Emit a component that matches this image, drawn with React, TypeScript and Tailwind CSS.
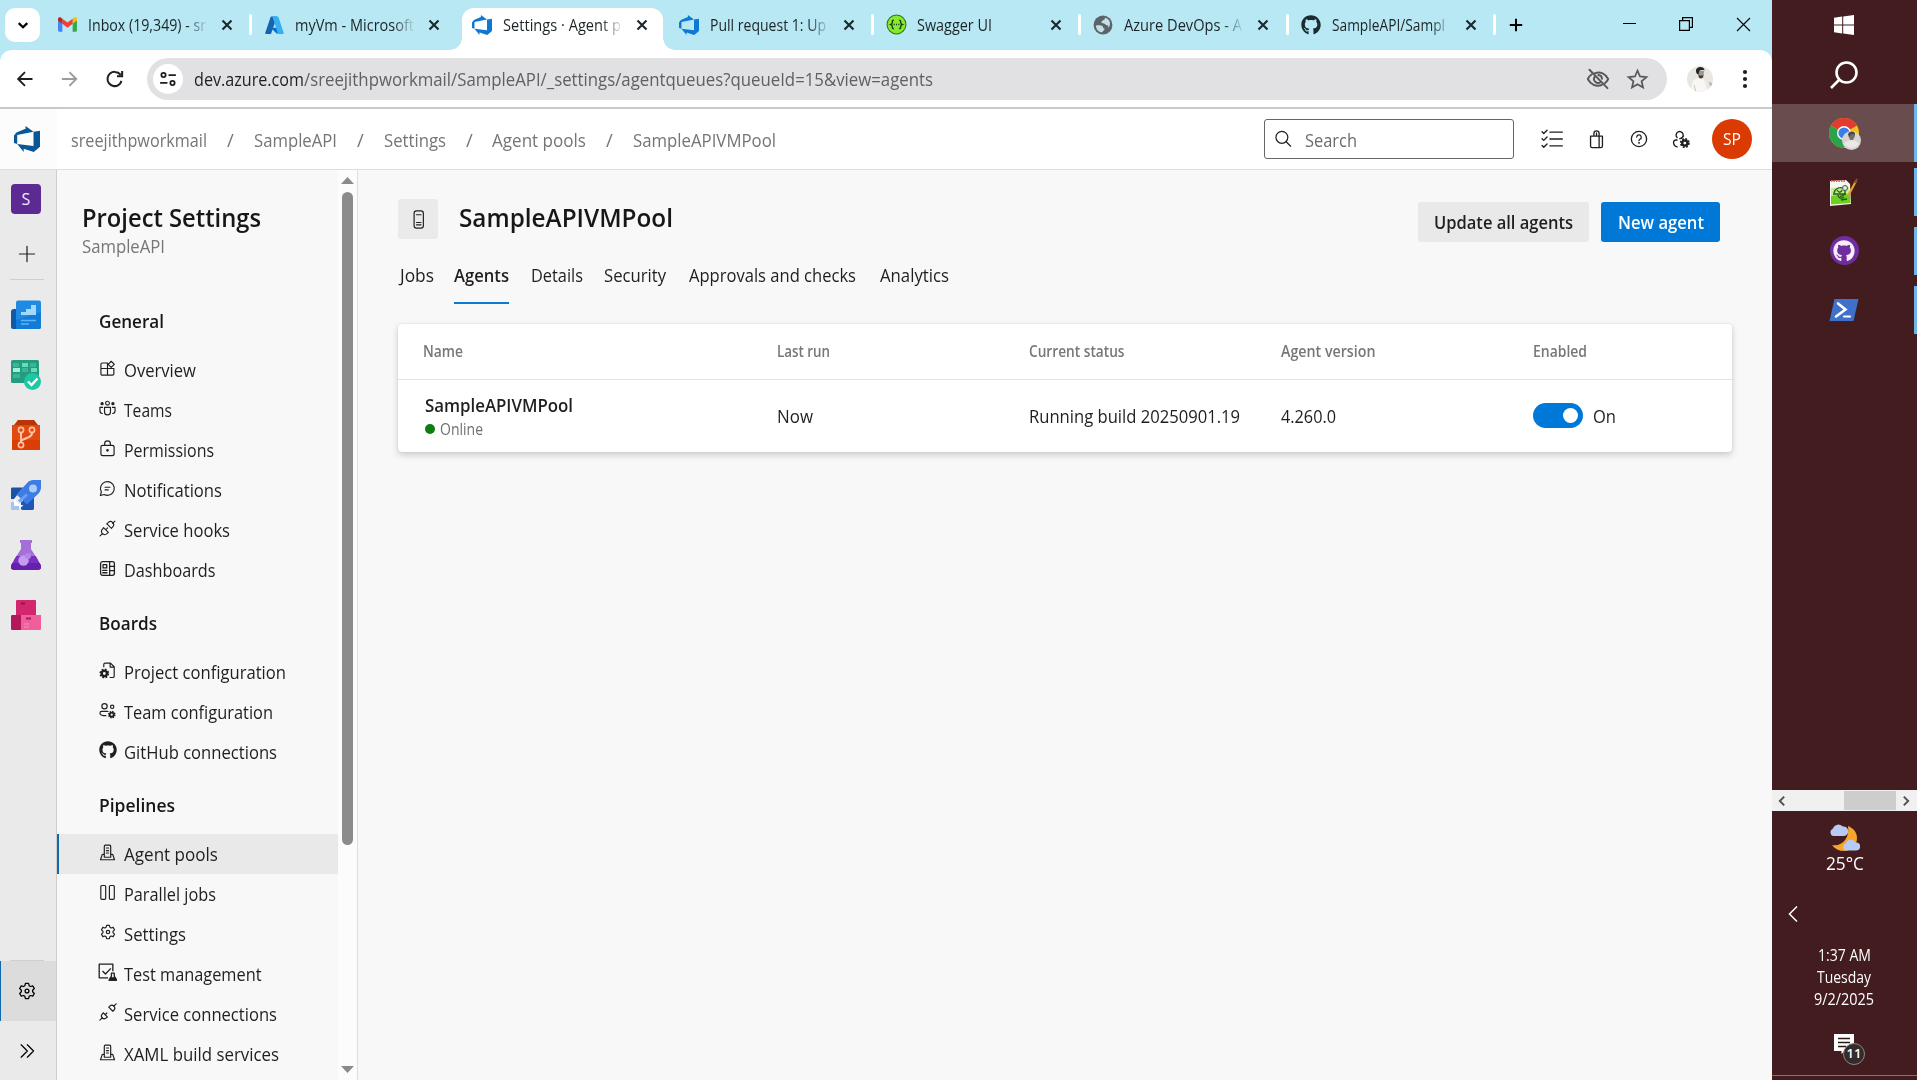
import { useLayoutEffect, useRef, useState, type ReactNode } from "react";
import { FaGithub } from "react-icons/fa";

/** One line of text whose glyphs are condensed or widened to an exact width. */
function Fit({ w, className = "", children }: { w: number; className?: string; children: ReactNode }) {
  const ref = useRef<HTMLSpanElement>(null);
  const [scale, setScale] = useState(1);
  useLayoutEffect(() => {
    if (ref.current && ref.current.offsetWidth > 0) {
      setScale(w / ref.current.getBoundingClientRect().width);
    }
  }, []);
  return (
    <span className={"block shrink-0 whitespace-nowrap " + className} style={{ width: w }}>
      <span ref={ref} className="inline-block origin-left" style={{ transform: `scaleX(${scale})` }}>
        {children}
      </span>
    </span>
  );
}

function Line({ size = 18, className = "", sw = 1.1, children }: { size?: number; className?: string; sw?: number; children: ReactNode }) {
  return (
    <svg width={size} height={size} viewBox="0 0 16 16" fill="none" stroke="currentColor" strokeWidth={sw} strokeLinecap="round" strokeLinejoin="round" className={"shrink-0 " + className}>
      {children}
    </svg>
  );
}

/** Small filled gear with a round hole, centred on (cx, cy). */
function SolidGear({ cx, cy, r = 3.8 }: { cx: number; cy: number; r?: number }) {
  return (
    <g transform={`translate(${cx} ${cy}) scale(${r / 4})`} strokeLinecap="butt">
      <circle r="2.100" strokeWidth="1.900" />
      <circle r="3.300" strokeWidth="1.400" strokeDasharray="1.500 1.091" />
    </g>
  );
}

/* ---------- logos ---------- */

function DevOpsLogo({ size, className = "" }: { size: number; className?: string }) {
  return (
    <svg width={size} height={size} viewBox="0 0 24 24" className={className} fill="currentColor">
      <path d="M0 8.877L2.247 5.91l8.405-3.416V.022l7.37 5.393L2.966 8.338v8.225L0 15.707zm24-4.45v14.651l-5.753 4.9-9.303-3.057v3.056l-5.978-7.416 15.057 1.798V5.415z" />
    </svg>
  );
}

function GmailLogo() {
  return (
    <svg width="19" height="15" viewBox="0 0 24 18">
      <path d="M0 3v13.4C0 17.3.7 18 1.6 18h3.9V7.5z" fill="#4285f4" />
      <path d="M18.5 18h3.9c.9 0 1.6-.7 1.6-1.6V3l-5.5 4.5z" fill="#34a853" />
      <path d="M18.500 1.700v6.500L24 4V2.200C24 .2 21.700-.7 20.200.4z" fill="#fbbc04" />
      <path d="M5.500 8.200V1.700L12 6.600l6.500-4.900v6.500L12 13.100z" fill="#ea4335" />
      <path d="M0 2.200V4l5.500 4.200V1.700L3.800.4C2.300-.7 0 .2 0 2.200z" fill="#c5221f" />
    </svg>
  );
}

function AzureLogo() {
  return (
    <svg width="19" height="18" viewBox="0 0 96 92">
      <path d="M33 2h28L31 89c-1 2-3 3-5 3H6c-4 0-6-3-5-7L28 5c1-2 3-3 5-3z" fill="#1564b0" />
      <path d="M71 60H28l28 27c2 2 4 3 6 3h24z" fill="#0b6fcf" />
      <path d="M68 5c-1-2-3-3-5-3H33c2 0 4 1 5 3l26 80c1 4-1 7-5 7h31c4 0 6-3 5-7z" fill="#35b0f0" />
    </svg>
  );
}

function SwaggerLogo() {
  return (
    <svg width="21" height="21" viewBox="0 0 20 20">
      <circle cx="10" cy="10" r="9.500" fill="#2c7a0b" />
      <circle cx="10" cy="10" r="8.500" fill="#85ea2d" />
      <g fill="none" stroke="#1d3b14" strokeWidth="1.300">
        <path d="M7.500 5.800c-1.500 0-1.500.7-1.500 2s0 1.800-1.300 2.200C6 10.400 6 10.900 6 12.200s0 2 1.500 2M12.500 5.800c1.500 0 1.500.7 1.500 2s0 1.800 1.300 2.200c-1.300.4-1.300.9-1.300 2.200s0 2-1.500 2" />
        <path d="M7.300 10h1M9.500 10h1M11.700 10h1" />
      </g>
    </svg>
  );
}

function GlobeIcon() {
  return (
    <svg width="20" height="20" viewBox="0 0 24 24">
      <circle cx="12" cy="12" r="11.300" fill="#5b6468" />
      <path d="M3.500 12.500c3-.6 6.500-.5 8 1 .8 1 .2 2 1.500 2.300 1 .2 1 1 .5 2l-2.500 3C6.500 20.300 3.500 17 3.500 12.500zM10 3.500l4-.3c1 1-.2 2.500-1.500 2.700-1 .2-1 1.300-2 2-.8.600-.5 1.600.8 2 1.700.4 2.700.2 3.700 1.500.9 1.200 2.700.7 3.200 1.600.4.900 0 1.900-.6 2.700 2.500-1.500 3.400-5 2.400-8-1-2.700-4-4.500-6-4.500z" fill="#c4dfe5" />
    </svg>
  );
}

function CloseX() {
  return (
    <Line size={18} sw={1.9} className="text-[#1d2a2d]">
      <path d="M4 4l8 8M12 4l-8 8" strokeLinecap="butt" />
    </Line>
  );
}

/* ---------- browser chrome ---------- */

function Tab({ icon, title, w, active, fade = true, sep }: { icon: ReactNode; title: string; w: number; active?: boolean; fade?: boolean; sep?: boolean }) {
  return (
    <div className="relative flex h-[42px] w-[207.300px] shrink-0 items-center">
      {active && (
        <>
          <div className="absolute inset-y-0 left-[3px] w-[201px] rounded-t-[12px] bg-white" />
          <div className="absolute bottom-0 left-[-9px] size-3 bg-[radial-gradient(circle_at_0_0,#b7e8f3_11.500px,#fff_12px)]" />
          <div className="absolute bottom-0 left-[204px] size-3 bg-[radial-gradient(circle_at_100%_0,#b7e8f3_11.500px,#fff_12px)]" />
        </>
      )}
      <div className="relative ml-[11px] flex w-6 items-center justify-center pb-[9px]">{icon}</div>
      <div
        className={
          "relative ml-[9px] w-[120px] pb-[8px] text-[15.500px] leading-5 text-[#1c2426] " +
          (fade ? "[mask-image:linear-gradient(to_right,#000_82%,transparent)]" : "")
        }
      >
        <Fit w={w}>{title}</Fit>
      </div>
      <div className="relative ml-[10px] pb-[9px]">
        <CloseX />
      </div>
      {sep && <div className="mb-[9px] ml-auto h-[21px] w-[3px] translate-x-px rounded bg-white" />}
    </div>
  );
}

function TabStrip() {
  return (
    <div className="flex h-[50px] items-end bg-[#b7e8f3]">
      <div className="ml-[5px] mr-1 flex h-[42px] w-[35px] items-start">
        <div className="flex h-[34px] w-[35px] items-center justify-center rounded-[10px] bg-white">
          <Line size={18} sw={2}>
            <path d="M4.200 6.300L8 10l3.800-3.700" strokeLinecap="butt" strokeLinejoin="miter" />
          </Line>
        </div>
      </div>
      <Tab icon={<GmailLogo />} title="Inbox (19,349) - sr" w={118} sep />
      <Tab icon={<AzureLogo />} title="myVm - Microsoft" w={119} />
      <Tab icon={<DevOpsLogo size={20} className="text-[#0f78d4]" />} title="Settings · Agent p" w={118} active />
      <Tab icon={<DevOpsLogo size={20} className="text-[#0f78d4]" />} title="Pull request 1: Up" w={116} sep />
      <Tab icon={<SwaggerLogo />} title="Swagger UI" w={75} fade={false} sep />
      <Tab icon={<GlobeIcon />} title="Azure DevOps - A" w={118} sep />
      <Tab icon={<FaGithub size={20} className="text-[#1c2a30]" />} title="SampleAPI/Sampl" w={113} sep />
      <div className="ml-3 flex h-[42px] items-start pt-2">
        <Line size={18} sw={1.800}>
          <path d="M8 2.500v11M2.500 8h11" strokeLinecap="butt" />
        </Line>
      </div>
      <div className="ml-auto flex h-[42px] items-start gap-[43px] pr-[21px] pt-[8px] text-black">
        <svg width="14" height="16" className="mr-[-1px]"><path d="M0 7.500h13" stroke="currentColor" /></svg>
        <svg width="14" height="16" viewBox="0 0 14 16" fill="none" stroke="currentColor" strokeWidth="1.200">
          <path d="M.6 4.600h9.800v9.800H.6zM3.600 4.500V1.600h9.800v9.800h-2.900" />
        </svg>
        <svg width="15" height="16" fill="none" stroke="currentColor" strokeWidth="1.100"><path d="M1 2l13 13M14 2L1 15" /></svg>
      </div>
    </div>
  );
}

function Toolbar() {
  return (
    <div className="h-[59px] bg-[#b7e8f3]">
      <div className="flex h-[59px] items-start rounded-t-[12px] border-b-2 border-[#c9c9c9] bg-white pt-2 text-[#1f1f1f]">
        <div className="ml-[15px] flex h-[42px] items-center gap-[25px]">
          <Line size={20} sw={1.500}><path d="M14 8H2.500M8 2.500L2.500 8 8 13.500" strokeLinecap="butt" strokeLinejoin="miter" /></Line>
          <Line size={20} sw={1.500} className="text-[#9b9b9b]"><path d="M1.500 8H13M7.500 2.500L13 8l-5.500 5.500" strokeLinecap="butt" strokeLinejoin="miter" /></Line>
          <Line size={20} sw={1.600}><path d="M13.200 9.500A5.700 5.700 0 118 2.300c1.800 0 3.400.9 4.600 2.300M13.700 1.600v4.100H9.600" strokeLinecap="butt" strokeLinejoin="miter" /></Line>
        </div>
        <div className="ml-[22px] flex h-[42px] w-[1520px] items-center rounded-full bg-[#e1e1e3]">
          <div className="ml-[6px] flex size-[30px] items-center justify-center rounded-full bg-white">
            <Line size={18} sw={1.600}>
              <circle cx="4" cy="4.500" r="1.900" /><path d="M8.500 4.500H15M1 11.500h6.500" strokeLinecap="butt" /><circle cx="12" cy="11.500" r="1.900" />
            </Line>
          </div>
          <div className="ml-[10.500px] flex text-[18px] leading-6 text-[#5f6063]">
            <Fit w={110} className="text-[#1f1f1f]">dev.azure.com</Fit>
            <Fit w={629}>/sreejithpworkmail/SampleAPI/_settings/agentqueues?queueId=15&amp;view=agents</Fit>
          </div>
          <div className="ml-auto mr-[20px] flex items-center gap-[16px] text-[#57585b]">
            <Line size={24} sw={1.300}>
              <path d="M6 4.100C9.600 2.700 13 4.500 14.800 8c-.5 1.100-1.200 2-2.100 2.700M10.500 12C6.700 13.400 3 11.600 1.200 8c.6-1.300 1.500-2.300 2.500-3M6 6.200A2.700 2.700 0 009.800 10M8.200 5.300A2.700 2.700 0 0110.700 7.800M2.300 1.800l12 12.300" />
            </Line>
            <Line size={23} sw={1.200} className="-mr-[2px]">
              <path d="M8 1.800l1.750 4.100 4.450.4-3.400 2.900 1.050 4.400L8 11.300l-3.850 2.300L5.200 9.200 1.800 6.300l4.450-.4z" strokeLinejoin="miter" />
            </Line>
          </div>
        </div>
        <div className="ml-5 flex h-[42px] items-center">
          <svg width="26" height="26" viewBox="0 0 26 26">
            <clipPath id="face"><circle cx="13" cy="13" r="13" /></clipPath>
            <g clipPath="url(#face)">
              <path d="M0 0h26v26H0z" fill="#e9e7e3" />
              <path d="M3 26l3-11 5-3 6 1 4 13z" fill="#f8f7f4" />
              <path d="M10.500 5h6.500l-.5 6c-1 2-4 2-5 0z" fill="#a0978c" />
              <path d="M9 5c-.5-5 8.500-5.500 8.500-.5-3-1-5.500 0-5.500 1.500l-.5 2.500c-1.500 0-2.300-1.500-2.500-3.500z" fill="#242424" />
              <path d="M11.500 9c2 1 4 1 5-.5l-.8 3c-1 1-2.500 1-3.500 0z" fill="#3b3733" />
              <path d="M7 19l2 7M22 16l4 2-1 6z" stroke="#c9c5bf" fill="#a8a49e" />
            </g>
          </svg>
          <svg width="6" height="24" viewBox="0 0 6 24" className="ml-[29px]" fill="#1f1f1f">
            <circle cx="3" cy="5" r="2.100" /><circle cx="3" cy="12" r="2.100" /><circle cx="3" cy="19" r="2.100" />
          </svg>
        </div>
      </div>
    </div>
  );
}

/* ---------- product header ---------- */

const CRUMBS: [string, number][] = [
  ["sreejithpworkmail", 136],
  ["SampleAPI", 83],
  ["Settings", 62],
  ["Agent pools", 94],
  ["SampleAPIVMPool", 143],
];

function Header() {
  return (
    <div className="flex h-[61px] shrink-0 items-center border-b border-[#dedede] bg-white">
      <div className="flex h-full w-[57px] items-center bg-[#fcfcfc] pl-[14px]">
        <DevOpsLogo size={26} className="text-[#0a5797]" />
      </div>
      <div className="ml-[14px] flex items-center gap-5 pt-[2px] text-[17.500px] leading-6 text-[#757575]">
        {CRUMBS.map(([label, w], i) => (
          <div key={label} className="flex items-center gap-5">
            {i > 0 && <Fit w={6.8}>/</Fit>}
            <Fit w={w}>{label}</Fit>
          </div>
        ))}
      </div>
      <div className="ml-auto flex h-10 w-[250px] items-center rounded-[3px] border border-[#666] pl-[9px]">
        <Line size={18} sw={1.100} className="text-[#222]"><circle cx="7" cy="6.500" r="5.300" /><path d="M10.800 10.400l4 4" /></Line>
        <Fit w={52} className="ml-[13px] pt-0.5 text-[17.500px] leading-6 text-[#6b6b6b]">Search</Fit>
      </div>
      <div className="ml-[27px] flex items-center text-[#1f1f1f]">
        <Line size={22} sw={1}>
          <path d="M6.500 3h9M6.500 8h9M6.500 13h9M.8 2.800l1.200 1.200 2.400-2.400M.8 7.800L2 9l2.400-2.400M.8 12.800L2 14l2.400-2.400" />
        </Line>
        <Line size={19} sw={1.100} className="ml-[24px]">
          <path d="M3 5.200h10v8.300c0 .8-.6 1.400-1.400 1.400H4.400c-.8 0-1.400-.6-1.400-1.400zM5.800 5V3a2.200 2.200 0 014.400 0v2M8 5V2.500M10.200 5.200v9.500" />
        </Line>
        <Line size={18} sw={1.150} className="ml-6">
          <circle cx="8" cy="8" r="6.800" /><path d="M6 6.300a2 2 0 112.800 1.900c-.5.300-.8.600-.8 1.200" /><path d="M8 11.300v.2" strokeWidth="1.500" />
        </Line>
        <Line size={19} sw={1.150} className="ml-6">
          <path d="M4.300 6.400A3 3 0 116.500 7.300M9.300 5.700l.3-.6M4.300 8.400H3.200c-1.100 0-1.900.8-1.900 1.900 0 1.900 1.200 3.400 3 3.900" />
          <SolidGear cx={10.800} cy={11} r={4.200} />
        </Line>
      </div>
      <div className="ml-[21px] mr-5 flex size-10 items-center justify-center rounded-full bg-[#d93b02] text-[16px] text-white">
        <Fit w={18}>SP</Fit>
      </div>
    </div>
  );
}

/* ---------- service rail ---------- */

function Rail() {
  return (
    <div className="flex w-[57px] shrink-0 flex-col border-r border-[#cecece] bg-[#eaeaea]">
      <div className="ml-[11px] mt-[14px] flex size-[30px] items-center justify-center rounded-[4px] bg-[#5c2a92] text-[16px] text-[#f3e9fb]">S</div>
      <Line size={18} sw={1.100} className="ml-[17.500px] mt-[30.500px] text-[#222]"><path d="M8 1.300v13.400M1.300 8h13.400" /></Line>
      <div className="ml-[10px] mt-[16.500px] h-px w-[34px] bg-[#cfcfcf]" />
      <div className="ml-[11px] mt-[20px] flex flex-col gap-[30px]">
        <svg width="30" height="30" viewBox="0 0 30 30">
          <path d="M0 12c0-2 1-3 3-3h3v20H2c-1 0-2-1-2-2z" fill="#0f5ba6" />
          <rect x="5" y="0.500" width="25" height="28.500" rx="2" fill="#2089e2" />
          <path d="M5 20l25-8v15c0 1-1 2-2 2H5z" fill="#127bd8" />
          <path d="M10 12h5v-3h5V5h5v10H10z" fill="#a4d8ff" />
          <path d="M10 20.500h15M10 24h8" stroke="#5db5f8" strokeWidth="1.300" />
        </svg>
        <svg width="30" height="30" viewBox="0 0 30 30">
          <rect width="28" height="23" rx="1.500" fill="#259b80" />
          <path d="M2 3h6v4H2zM11 8h6v4h-6zM19 3h6v4h-6z" fill="#39b795" />
          <path d="M11 3h6v4h-6zM20 8h6v4h-6z" fill="#62dcb8" />
          <path d="M2 8h7v4H2z" fill="#9bf3d9" />
          <path d="M2 14h7v4H2z" fill="#38b694" />
          <circle cx="21.500" cy="21.500" r="8.500" fill="#1cc7a4" />
          <path d="M17 21.500l3.500 3.500 6-6.500" stroke="#fff" strokeWidth="2.400" fill="none" />
        </svg>
        <svg width="30" height="30" viewBox="0 0 30 30">
          <path d="M3 5l4-5h16l4 5z" fill="#b93505" />
          <path d="M1 5h28v23.500c0 1-.5 1.500-1.500 1.500h-25C1.500 30 1 29.500 1 28.500z" fill="#e2490f" />
          <path d="M1 20h28v8.500c0 1-.5 1.500-1.500 1.500h-25C1.500 30 1 29.500 1 28.500z" fill="#da3d05" />
          <g stroke="#ffc2a3" strokeWidth="1.600" fill="none">
            <circle cx="10" cy="10" r="2.600" /><circle cx="21" cy="10" r="2.600" /><circle cx="10" cy="25" r="2.600" />
            <path d="M10 12.500v10M21 12.500c0 3-1 4-4 5l-7 3" strokeWidth="2.100" />
          </g>
        </svg>
        <svg width="30" height="30" viewBox="0 0 30 30">
          <path d="M0 9c0-1 .5-1.500 1.500-1.500H12L3 19H0z" fill="#1b52a8" />
          <path d="M10 29V22l13-8v14c0 1-.5 2-1.500 2H11z" fill="#1e57b8" />
          <path d="M17 2c1-1 3-2 5-2h8v7c0 3-1 4-2 6L16 24.500 5.500 14.500z" fill="#3d7ce4" />
          <circle cx="22" cy="8.500" r="4" fill="#a9ccf8" />
          <path d="M7 20.500l8-7 2 2-8 7z" fill="#6ba0f2" />
          <path d="M4 18l1.500 4 3 2.500 4 1-4.500 3-4-1.500-1.500-4z" fill="#fff" />
          <path d="M0 22h3v4h5v4H1.500C.5 30 0 29.500 0 28.500z" fill="#a6c5ee" />
        </svg>
        <svg width="30" height="30" viewBox="0 0 30 30">
          <path d="M9 0h12v3h-1v6l7 11H3l7-11V3H9z" fill="#a56fd8" />
          <path d="M5.300 16h19.400l5 9c1 3 0 5-3 5H3.300c-3 0-4-2-3-5z" fill="#7830c2" />
          <path d="M1.300 23h27.400l1 2c1 3 0 5-3 5H3.300c-3 0-4-2-3-5z" fill="#6620aa" />
          <circle cx="12.500" cy="20.500" r="5.200" fill="#c59bf0" /><circle cx="17" cy="16" r="3" fill="#b486e4" />
        </svg>
        <svg width="30" height="30" viewBox="0 0 30 30">
          <rect x="5" width="20" height="16" rx="1" fill="#d4266c" />
          <path d="M10 2.500h4v2h-4z" fill="#8f174a" />
          <path d="M0 16.500C0 15.500.5 15 1.500 15H11v15H1.500C.5 30 0 29.500 0 28.500z" fill="#b3185a" />
          <path d="M10 15h20v13.500c0 1-.5 1.500-1.500 1.500H10z" fill="#ef5f9b" />
          <path d="M15 17.500h5v2h-5z" fill="#a31d56" /><path d="M13 24h5M13 27h5" stroke="#f68fba" />
        </svg>
      </div>
      <div className="ml-[10px] mt-auto h-px w-[34px] bg-[#cfcfcf]" />
      <div className="flex h-[60px] items-center border-l border-[#1169ad] bg-[#dcdcdc] pl-[16.500px]">
        <GearIcon size={18} />
      </div>
      <div className="flex h-[59px] items-center pl-[17.500px]">
        <Line size={18} sw={1.100}><path d="M2.800 2.500L8.300 8l-5.500 5.500M8.300 2.500L13.800 8l-5.500 5.500" /></Line>
      </div>
    </div>
  );
}

function GearIcon({ size = 17 }: { size?: number }) {
  return (
    <Line size={size} sw={1.150}>
      <path d="M6.600 1.300h2.800l.5 2 1.200.7 2-.6 1.400 2.400-1.500 1.500v1.400l1.500 1.500-1.400 2.400-2-.6-1.200.7-.5 2H6.600l-.5-2-1.200-.7-2 .6-1.400-2.400L3 8.700V7.300L1.500 5.800l1.400-2.400 2 .6 1.200-.7z" />
      <circle cx="8" cy="8" r="1.700" />
    </Line>
  );
}

/* ---------- settings sidebar ---------- */

const serverIcon = (
  <Line size={17}>
    <path d="M5 12.500V2c0-.6.300-.9.900-.9h4.200c.6 0 .9.300.9.900v10.500zM7 3.800h2M7 6.300h2M7 8.500h2M4.800 9.500L3 10l-1.600 4.800h13.200L13 10l-1.800-.5" />
  </Line>
);

const ICONS: Record<string, ReactNode> = {
  overview: (
    <Line size={17}><path d="M8 5.200V2.800H3.200c-.9 0-1.400.5-1.400 1.300V8H14v4.900c0 .8-.5 1.300-1.400 1.300H3.200c-.9 0-1.400-.5-1.400-1.300V8M8 5.500v8.700M11.500 1.200l2.900 2.900L11.500 7 8.600 4.100z" /></Line>
  ),
  teams: (
    <Line size={17}>
      <circle cx="8" cy="3" r="1.800" /><circle cx="2.900" cy="3.500" r="1" fill="currentColor" /><circle cx="13.100" cy="3.500" r="1" fill="currentColor" />
      <path d="M5.200 7h5.600v4.200a2.800 2.800 0 01-5.600 0zM3.300 7H.9v3c0 1.500.8 2.500 2.200 2.700M12.700 7h2.400v3c0 1.500-.8 2.500-2.200 2.700" />
    </Line>
  ),
  lock: (
    <Line size={17}><rect x="1.800" y="5" width="12.400" height="9.700" rx="1.800" /><path d="M5.300 5V3.600a2.700 2.700 0 015.400 0V5" /><circle cx="8" cy="9.700" r=".7" fill="currentColor" /></Line>
  ),
  chat: (
    <Line size={17}><path d="M1.300 14.600l.9-3.400A6.500 6.500 0 118 14.500a6.500 6.500 0 01-3.100-.8zM5.700 6.800h4.600M5.700 9.300h3" /></Line>
  ),
  plug: (
    <Line size={17} sw={1.050}>
      <path d="M1 15l2.200-2.200M15 1l-2.200 2.200M4.300 7.200l4.500 4.500-1.300 1.200c-1.300 1.300-3 1.200-4.200 0s-1.300-2.900 0-4.300zM8.200 4.300l3.500 3.500 1.200-1.300c1.200-1.300 1.100-3-.1-4.200s-2.800-1.200-4.200.1L7.200 3.600zM6.300 9.200l1.800-1.800" />
    </Line>
  ),
  dashboard: (
    <Line size={17} sw={1.200}><rect x="1.500" y="1.500" width="13" height="13" rx="2" /><path d="M10 1.500v13M10 6h4.500M10 10h4.500M3.800 4.300h3.500v3.200H3.800zM3.500 9.800h4M3.500 12h4" /></Line>
  ),
  fileGear: (
    <Line size={17}>
      <path d="M4.500 4.500V2.300c0-.8.500-1.300 1.300-1.300h5l3.500 3.500v8.800c0 .8-.5 1.300-1.300 1.300h-2.600M10.500 1.100v3.700h3.700" />
      <SolidGear cx={5} cy={10.800} r={4.600} />
    </Line>
  ),
  teamGear: (
    <Line size={17}>
      <circle cx="5.200" cy="4" r="2.500" /><circle cx="12.400" cy="4.500" r="1.600" /><path d="M8.500 8.800H2.600c-1 0-1.700.6-1.700 1.500 0 1.700 2.200 2.600 5.600 2.600" />
      <SolidGear cx={12} cy={11.900} r={3.600} />
    </Line>
  ),
  github: <FaGithub size={18} />,
  server: serverIcon,
  parallel: (
    <Line size={17}><rect x="1.700" y="1.400" width="4.600" height="13" rx="1" /><rect x="9.800" y="1.400" width="4.600" height="13" rx="1" /></Line>
  ),
  gear: <GearIcon size={16} />,
  test: (
    <Line size={19}>
      <path d="M8.500 12.500H1V1h11.500v6M3.800 6.800l2.500 2.500 4.500-4.800" strokeLinecap="butt" />
      <path d="M11.300 8.500h2.400v2.600l1.900 3.400H9.400l1.900-3.400z" /><path d="M10.500 12.500h4l1 2h-6z" fill="currentColor" />
    </Line>
  ),
  plugOpen: (
    <Line size={18} sw={1.050}>
      <path d="M.8 15.200l2.200-2.200M15.200.8L13 3M3.700 8.700l3.700 3.700-.9.800c-1.200 1.100-2.600 1-3.600 0s-1-2.400.1-3.600zM8.700 3.700l3.600 3.600.9-.8c1.100-1.200 1-2.700 0-3.700s-2.500-1.100-3.600 0zM5.700 10.200L7 8.900" />
    </Line>
  ),
};

const GROUPS: { title: string; w: number; items: [string, string, number][] }[] = [
  {
    title: "General",
    w: 65,
    items: [
      ["overview", "Overview", 72],
      ["teams", "Teams", 48],
      ["lock", "Permissions", 90],
      ["chat", "Notifications", 98],
      ["plug", "Service hooks", 106],
      ["dashboard", "Dashboards", 91.5],
    ],
  },
  {
    title: "Boards",
    w: 58,
    items: [
      ["fileGear", "Project configuration", 162],
      ["teamGear", "Team configuration", 149],
      ["github", "GitHub connections", 153],
    ],
  },
  {
    title: "Pipelines",
    w: 76,
    items: [
      ["server", "Agent pools", 94],
      ["parallel", "Parallel jobs", 92],
      ["gear", "Settings", 62],
      ["test", "Test management", 137.5],
      ["plugOpen", "Service connections", 153],
      ["server", "XAML build services", 155],
    ],
  },
];

function Sidebar() {
  return (
    <div className="flex w-[301px] shrink-0 overflow-hidden border-r border-[#dfdfdf]">
      <div className="w-[281px] overflow-hidden bg-[#f8f8f8]">
        <div className="ml-[25px] mt-[30px]">
          <Fit w={179} className="text-[25px] font-semibold leading-[34px] text-[#171717]">Project Settings</Fit>
          <Fit w={83} className="text-[17.500px] leading-6 text-[#767676]">SampleAPI</Fit>
        </div>
        <div className="mt-[39.500px]">
          {GROUPS.map((g) => (
            <div key={g.title} className="mb-[10px]">
              <Fit w={g.w} className="ml-[42px] h-[52px] text-[18px] font-semibold leading-[47px] text-[#171717]">{g.title}</Fit>
              {g.items.map(([icon, label, w]) => (
                <div
                  key={label}
                  className={"flex h-10 items-center text-[17.500px] leading-6 text-[#1f1f1f] " + (label === "Agent pools" ? "border-l-2 border-[#1169ad] bg-[#e9e9e9]" : "pl-0.5")}
                >
                  <div className="ml-[38.500px] flex w-5 justify-center pb-[3px]">{ICONS[icon]}</div>
                  <Fit w={w} className="ml-[6.500px]">{label}</Fit>
                </div>
              ))}
            </div>
          ))}
        </div>
      </div>
      <div className="flex w-[19px] flex-col items-center bg-[#fcfcfc]">
        <svg width="13" height="7" className="mt-[7px]"><path d="M0 7L6.500 0 13 7z" fill="#8b8b8b" /></svg>
        <div className="mt-2 h-[653px] w-[11px] rounded-full bg-[#8b8b8b]" />
        <svg width="13" height="7" className="mb-[7px] mt-auto"><path d="M0 0l6.500 7L13 0z" fill="#8b8b8b" /></svg>
      </div>
    </div>
  );
}

/* ---------- main ---------- */

const PIVOTS: [string, number, string][] = [
  ["Jobs", 34, ""],
  ["Agents", 55, "ml-[20px]"],
  ["Details", 52, "ml-[21.500px]"],
  ["Security", 62, "ml-[21.500px]"],
  ["Approvals and checks", 167, "ml-[23px]"],
  ["Analytics", 69, "ml-[24px]"],
];

const COLS: [string, number][] = [
  ["Name", 40],
  ["Last run", 53],
  ["Current status", 95.5],
  ["Agent version", 94.5],
  ["Enabled", 54],
];

function Main() {
  return (
    <div className="min-w-0 flex-1 bg-[#f8f8f8]">
      <div className="flex pl-10 pt-[29px]">
        <div className="flex size-10 items-center justify-center rounded-[3px] bg-[#eaeaea] text-[#222]">
          <Line size={19} sw={1}><rect x="4.300" y=".8" width="7.800" height="14.400" rx="2" /><path d="M6.300 4h3.800M6.300 10.500h3.800M6.300 12.500h3.800" /></Line>
        </div>
        <Fit w={214} className="ml-[20.500px] mt-px text-[25px] font-semibold leading-[34px] text-[#171717]">SampleAPIVMPool</Fit>
        <div className="ml-auto mr-[52px] mt-[3px] flex gap-[12px] text-[18px] font-semibold leading-6">
          <div className="flex h-10 w-[171px] items-center justify-center rounded-[3px] bg-[#e9e9e9] pb-px text-[#1f1f1f]">
            <Fit w={139}>Update all agents</Fit>
          </div>
          <div className="flex h-10 w-[119px] items-center justify-center rounded-[3px] bg-[#0078d7] pb-px text-white">
            <Fit w={86}>New agent</Fit>
          </div>
        </div>
      </div>
      <div className="ml-[42px] mt-4 flex h-[46px] text-[17.500px] leading-[34px] text-[#1f1f1f]">
        {PIVOTS.map(([label, w, gap]) => (
          <div key={label} className={gap + (label === "Agents" ? " border-b-2 border-[#0f78d0] text-[18px] font-semibold" : "")}>
            <Fit w={w}>{label}</Fit>
          </div>
        ))}
      </div>
      <div className="ml-10 mr-10 mt-5 h-[128px] rounded-[4px] bg-white shadow-[0_3px_7px_rgba(0,0,0,0.18),0_0_2px_rgba(0,0,0,0.1)]">
        <div className="grid h-14 grid-cols-[353.500px_252px_252px_252px_1fr] items-center border-b border-[#e3e3e3] pl-[25px] text-[15.500px] font-semibold text-[#777]">
          {COLS.map(([label, w]) => (
            <Fit key={label} w={w}>{label}</Fit>
          ))}
        </div>
        <div className="grid h-[72px] grid-cols-[353.500px_252px_252px_252px_1fr] items-center pl-[25px] text-[17.500px] text-[#1f1f1f]">
          <div className="ml-[1.500px] pt-[1px]">
            <Fit w={148} className="text-[18px] font-semibold leading-6">SampleAPIVMPool</Fit>
            <div className="flex items-center text-[15.500px] leading-6 text-[#6f6f6f]">
              <div className="mr-[5px] size-[10px] rounded-full bg-[#107c10]" />
              <Fit w={43}>Online</Fit>
            </div>
          </div>
          <Fit w={36}>Now</Fit>
          <Fit w={211}>Running build 20250901.19</Fit>
          <Fit w={55}>4.260.0</Fit>
          <div className="flex items-center">
            <div className="mb-px flex h-[25px] w-[50px] items-center justify-end rounded-full bg-[#0078d7] pr-[5px]">
              <div className="size-[15px] rounded-full bg-white" />
            </div>
            <Fit w={23} className="ml-[10.500px]">On</Fit>
          </div>
        </div>
      </div>
    </div>
  );
}

/* ---------- windows taskbar ---------- */

function TaskItem({ children, active, first }: { children: ReactNode; active?: boolean; first?: boolean }) {
  return (
    <div className={"flex w-full items-center justify-end " + (active ? "h-[58px] bg-[#694c4d]" : first ? "mt-[6px] h-12" : "mt-[11px] h-12")}>
      <div className="flex flex-1 justify-center pl-px">{children}</div>
      <div className="h-full w-[3px] bg-[#70b4ea]" />
    </div>
  );
}

function Taskbar() {
  return (
    <div className="flex w-[145px] shrink-0 flex-col items-center bg-[#421c1e] text-white">
      <svg width="20" height="20" viewBox="0 0 20 20" fill="#fff" className="mr-px mt-[15px]">
        <path d="M0 2.800l8.200-1.200v8H0zM9.200 1.400L20 0v9.500H9.200zM0 10.500h8.200v8L0 17.300zM9.200 10.500H20V20L9.200 18.600z" />
      </svg>
      <svg width="28" height="28" viewBox="0 0 28 28" fill="none" stroke="#fff" strokeWidth="2.600" className="mb-[15px] mr-px mt-[26px] shrink-0">
        <circle cx="16.500" cy="11.500" r="10" /><path d="M9.500 18.500L1 27" />
      </svg>
      <TaskItem active>
        <svg width="32" height="32" viewBox="0 0 32 32" className="ml-0.5 mt-0.5">
          <circle cx="15" cy="15" r="15" fill="#fbc116" />
          <path d="M15 15L2 7.500a15 15 0 0126 0z" fill="#e33b2e" />
          <path d="M15 15L2 7.500A15 15 0 0015 30l6.500-11.300z" fill="#2ba24c" />
          <circle cx="15" cy="15" r="7" fill="#fff" /><circle cx="15" cy="15" r="5.600" fill="#3a7de8" />
          <circle cx="22.500" cy="22.500" r="9.500" fill="#d8d4d0" />
          <path d="M19 17c1-4 8-4 7 1l-2 4h-3z" fill="#73706d" /><path d="M19 16c2-4 8-3 7 1-2-2-5-1-5 2z" fill="#4a4846" />
          <path d="M15 26c3-5 12-5 15 0a9.500 9.500 0 01-15 0z" fill="#ece9e4" />
        </svg>
      </TaskItem>
      <TaskItem first>
        <svg width="29" height="29" viewBox="0 0 29 29">
          <path d="M1 3l16-1 4 4 1 20-21 2z" fill="#f5f7ee" />
          <path d="M2 17l19-2 .5 10L2 26.500z" fill="#6fce22" /><path d="M2 10l18-1v6.500L2 18z" fill="#c4eb8e" />
          <path d="M2 3h14" stroke="#d66" strokeWidth="2" strokeDasharray="1.500 1" />
          <path d="M5 15c1-5 7-7 10-4 3 4-1 8-4 7M4 16h13M8 12c2 3 4 3 5 0M9 17c0 3 3 4 6 2M12 22l6-1" stroke="#235c14" strokeWidth="1.300" fill="none" />
          <circle cx="16" cy="10" r="2.500" fill="#dff0d0" stroke="#456" />
          <path d="M19 18L27 3" stroke="#e9a322" strokeWidth="2.200" /><path d="M26 5l2-4" stroke="#8a4b3b" strokeWidth="2" />
        </svg>
      </TaskItem>
      <TaskItem>
        <div className="mb-px ml-px flex size-[29px] items-center justify-center rounded-full bg-[#6f2da0]">
          <FaGithub size={22} className="text-[#f6effb]" />
        </div>
      </TaskItem>
      <TaskItem>
        <svg width="30" height="22" viewBox="0 0 30 22" className="mb-px">
          <path d="M5.500 0H29.500L24.500 22H.5z" fill="#3f70cb" />
          <path d="M9 4.500l7.500 6L7 17.500" stroke="#fff" strokeWidth="2.600" fill="none" strokeLinecap="round" /><path d="M15 17.500h6" stroke="#fff" strokeWidth="2.200" strokeLinecap="round" />
        </svg>
      </TaskItem>
      <div className="mt-[456px] flex h-[21px] w-full items-center bg-[#f0f0f0] text-[#505050]">
        <Line size={14} sw={2.200} className="ml-[3px]"><path d="M10.500 3L5.500 8l5 5" strokeLinecap="butt" strokeLinejoin="miter" /></Line>
        <div className="ml-[55px] h-[19px] w-[52px] bg-[#cdcdcd]" />
        <Line size={14} sw={2.200} className="ml-[3px]"><path d="M5.500 3l5 5-5 5" strokeLinecap="butt" strokeLinejoin="miter" /></Line>
      </div>
      <svg width="31" height="28" viewBox="0 0 31 28" className="mt-[13px]">
        <path d="M19 2c5 2 9 6 9 12 0 8-6 13-13 13-5 0-9-2-12-6 10 2 18-7 16-19z" fill="#f6a62b" />
        <path d="M4 12a4 4 0 010-7.500A6 6 0 0114 2.500a4.600 4.600 0 011 9.500z" fill="#b8c9f4" />
        <path d="M17 26.500a3.600 3.600 0 01-.2-7 5.500 5.500 0 0110-1 4 4 0 01.7 8z" fill="#b5cbf8" />
      </svg>
      <Fit w={38} className="mt-[-2px] text-[18px] leading-[26px]">25°C</Fit>
      <svg width="10" height="16" viewBox="0 0 10 16" fill="none" stroke="#fff" strokeWidth="1.500" className="ml-4 mt-[30px] self-start"><path d="M9 .5L1.500 8 9 15.500" /></svg>
      <div className="mr-px mt-[22px] flex flex-col items-center text-[15.500px] leading-[22.200px]">
        <Fit w={53}>1:37 AM</Fit>
        <Fit w={54}>Tuesday</Fit>
        <Fit w={60}>9/2/2025</Fit>
      </div>
      <div className="relative mr-px mt-[23px] h-[41px] w-5">
        <svg width="20" height="20" viewBox="0 0 20 20"><path d="M0 0h20v17H10.500L7.500 20V17H0z" fill="#fff" /><path d="M4 4.500h12M4 8.500h12M4 12.500h8" stroke="#2c1718" strokeWidth="1.300" /></svg>
        <div className="absolute left-[9px] top-[9px] flex size-[22px] items-center justify-center rounded-full border border-[#8f8585] bg-[#332b2c] text-[13px] font-semibold">11</div>
      </div>
      <div className="h-px w-full bg-[#8b6d6e]" />
    </div>
  );
}

export default function App() {
  return (
    <div className="flex h-[1080px] w-[1917px] overflow-hidden font-['Open_Sans','Noto_Sans',sans-serif]">
      <div className="flex w-[1772px] shrink-0 flex-col">
        <TabStrip />
        <Toolbar />
        <Header />
        <div className="flex min-h-0 flex-1">
          <Rail />
          <Sidebar />
          <Main />
        </div>
      </div>
      <Taskbar />
    </div>
  );
}
